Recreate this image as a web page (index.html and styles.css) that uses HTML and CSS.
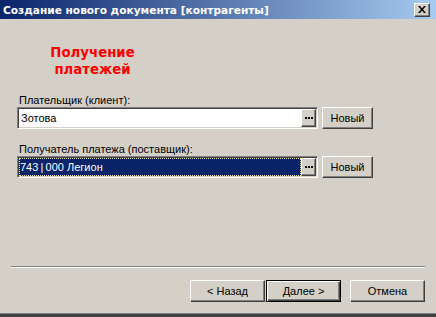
FILE: index.html
```html
<!DOCTYPE html>
<html lang="ru">
<head>
    <meta charset="UTF-8">
    <title>Создание нового документа [контрагенты]</title>
    <link rel="stylesheet" href="styles.css">
</head>
<body>
    <div class="window">
        <div class="titlebar">
            <span class="title">Создание нового документа [контрагенты]</span>
            <button class="close">
                <svg width="8" height="7" viewBox="0 0 8 7"><path d="M0 0h2l2 2.5 2-2.5h2l-3 3.5 3 3.5h-2l-2-2.5-2 2.5h-2l3-3.5z" fill="#000"/></svg>
            </button>
        </div>

        <div class="content">
            <div class="heading">Получение<br>платежей</div>

            <!-- Плательщик -->
            <div class="label first">Плательщик (клиент):</div>
            <div class="row">
                <div class="field">
                    <span class="value">Зотова</span>
                    <span class="pick"><svg width="8" height="2"><rect x="0" width="2" height="2"/><rect x="3" width="2" height="2"/><rect x="6" width="2" height="2"/></svg></span>
                </div>
                <button class="btn new">Новый</button>
            </div>

            <!-- Получатель -->
            <div class="label">Получатель платежа (поставщик):</div>
            <div class="row">
                <div class="field">
                    <span class="value selected">743&#8201;|&#8201;000 Легион</span>
                    <span class="pick"><svg width="8" height="2"><rect x="0" width="2" height="2"/><rect x="3" width="2" height="2"/><rect x="6" width="2" height="2"/></svg></span>
                </div>
                <button class="btn new">Новый</button>
            </div>
        </div>

        <div class="separator"></div>
        <div class="actions">
            <button class="btn">&lt; Назад</button>
            <button class="btn default">Далее &gt;</button>
            <button class="btn cancel">Отмена</button>
        </div>
        <div class="frame-bottom"></div>
    </div>
</body>
</html>
```

FILE: styles.css
```css
body {
    margin: 0;
    background-color: #d4d0c8;
    font-family: "Liberation Sans", Arial, sans-serif;
    font-size: 11px;
    color: #000;
}
.window {
    display: flex;
    flex-direction: column;
    width: 436px;
    height: 317px;
    overflow: hidden;
}
.titlebar {
    display: flex;
    align-items: center;
    justify-content: space-between;
    height: 19px;
    flex-shrink: 0;
    padding: 0 6px 0 3px;
    background: linear-gradient(to right, #0a246a, #a6caf0);
}
.title {
    font-family: "DejaVu Sans", sans-serif;
    font-weight: bold;
    font-size: 10.6px;
    color: #fff;
    white-space: nowrap;
}
.close {
    display: flex;
    align-items: center;
    justify-content: center;
    width: 16px;
    height: 14px;
    padding: 0;
    background-color: #d4d0c8;
    border: 1px solid;
    border-color: #fff #404040 #404040 #fff;
    box-shadow: inset -1px -1px #808080;
}
.content {
    flex: 1;
    padding-left: 17px;
}
.heading {
    width: 151px;
    margin-top: 25px;
    font-family: "DejaVu Sans", sans-serif;
    font-weight: bold;
    font-size: 13.3px;
    line-height: 17px;
    color: #ff0000;
    text-align: center;
}
.label {
    margin-top: 14px;
    padding-left: 2px;
    line-height: 13px;
}
.label.first {
    margin-top: 16px;
}
.row {
    display: flex;
    gap: 4px;
}
.field {
    display: flex;
    width: 301px;
    height: 22px;
    box-sizing: border-box;
    background-color: #fff;
    border: 1px solid;
    border-color: #808080 #fff #fff #808080;
    box-shadow: inset 1px 1px #404040, inset -1px -1px #d4d0c8;
    padding: 1px;
}
.value {
    flex: 1;
    padding-left: 2px;
    line-height: 18px;
    white-space: nowrap;
}
.value.selected {
    background-color: #0a246a;
    color: #fff;
    border: 1px dotted #e8e0a0;
    line-height: 16px;
    padding-left: 0;
}
.pick {
    display: flex;
    align-items: center;
    justify-content: center;
    width: 15px;
    box-sizing: border-box;
    background-color: #d4d0c8;
    border: 1px solid;
    border-color: #fff #404040 #404040 #fff;
    box-shadow: inset -1px -1px #808080;
}
.btn {
    height: 22px;
    padding: 0;
    font-family: "Liberation Sans", Arial, sans-serif;
    font-size: 11px;
    color: #000;
    background-color: #d4d0c8;
    border: 1px solid;
    border-color: #fff #404040 #404040 #fff;
    box-shadow: inset -1px -1px #808080;
}
.btn.new {
    width: 51px;
}
.separator {
    margin: 0 11px;
    border-top: 1px solid #808080;
    border-bottom: 1px solid #fff;
}
.actions {
    display: flex;
    justify-content: flex-end;
    padding: 12px 11px 11px 0;
}
.actions .btn {
    width: 75px;
}
.btn.default {
    margin-left: 1px;
    border: 1px solid #000;
    box-shadow: inset 1px 1px #fff, inset -1px -1px #404040, inset -2px -2px #808080;
}
.btn.cancel {
    margin-left: 9px;
}
.frame-bottom {
    height: 4px;
    flex-shrink: 0;
    background-color: #404040;
    border-top: 1px solid #808080;
    box-sizing: border-box;
}
```
